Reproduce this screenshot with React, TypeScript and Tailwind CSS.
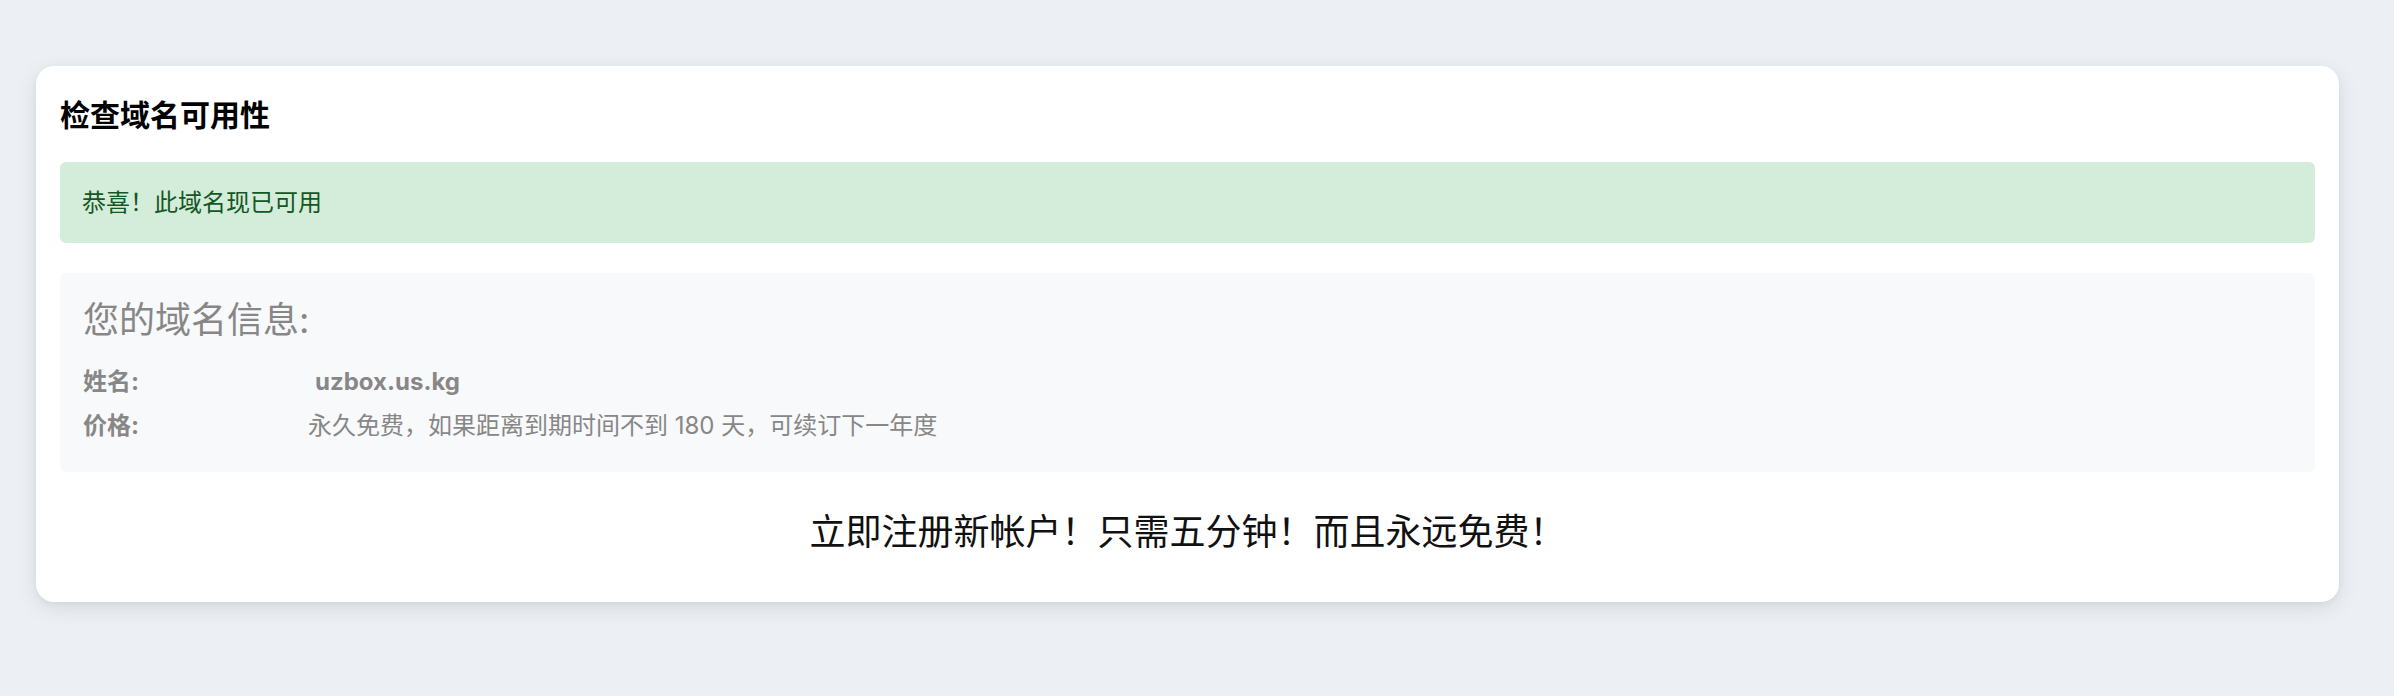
const fontStack = "font-['Inter','Noto_Sans_CJK_SC',sans-serif]";

function Alert() {
  return (
    <div className="bg-[#d4edda] rounded-[6px] px-[22px] py-[22px] text-[24px] leading-[37px] text-[#155724]">
      恭喜！此域名现已可用
    </div>
  );
}

function InfoRow({ label, children }: { label: string; children: React.ReactNode }) {
  return (
    <div className="grid grid-cols-[225px_1fr] items-center h-[44px] text-[24px] leading-[36px] text-[#878787]">
      <span className="font-bold">{label}</span>
      <span>{children}</span>
    </div>
  );
}

function DomainInfo() {
  return (
    <div className="mt-[30px] bg-[#f8f9fa] rounded-[6px] px-[23px] pt-[26px] pb-[24px]">
      <h4 className="text-[36px] leading-[43px] font-normal text-[#878787]">您的域名信息:</h4>
      <div className="mt-[18px]">
        <InfoRow label="姓名:">
          <b className="pl-[7px] font-bold">uzbox.us.kg</b>
        </InfoRow>
        <InfoRow label="价格:">永久免费，如果距离到期时间不到 180 天，可续订下一年度</InfoRow>
      </div>
    </div>
  );
}

export default function App() {
  return (
    <div className={`${fontStack} min-h-[696px] bg-[#ecf0f4] pt-[66px] pl-[36px] pr-[55px]`}>
      <div className="bg-white rounded-[18px] px-[24px] pt-[27px] pb-[43px] shadow-[0_6px_22px_rgba(0,0,0,0.09),0_2px_6px_rgba(0,0,0,0.05)]">
        <h5 className="text-[30px] leading-[45px] font-bold text-black mb-[24px]">检查域名可用性</h5>
        <Alert />
        <DomainInfo />
        <p className="mt-[33px] text-center text-[36px] leading-[54px] text-[#111]">
          立即注册新帐户！只需五分钟！而且永远免费！
        </p>
      </div>
    </div>
  );
}
